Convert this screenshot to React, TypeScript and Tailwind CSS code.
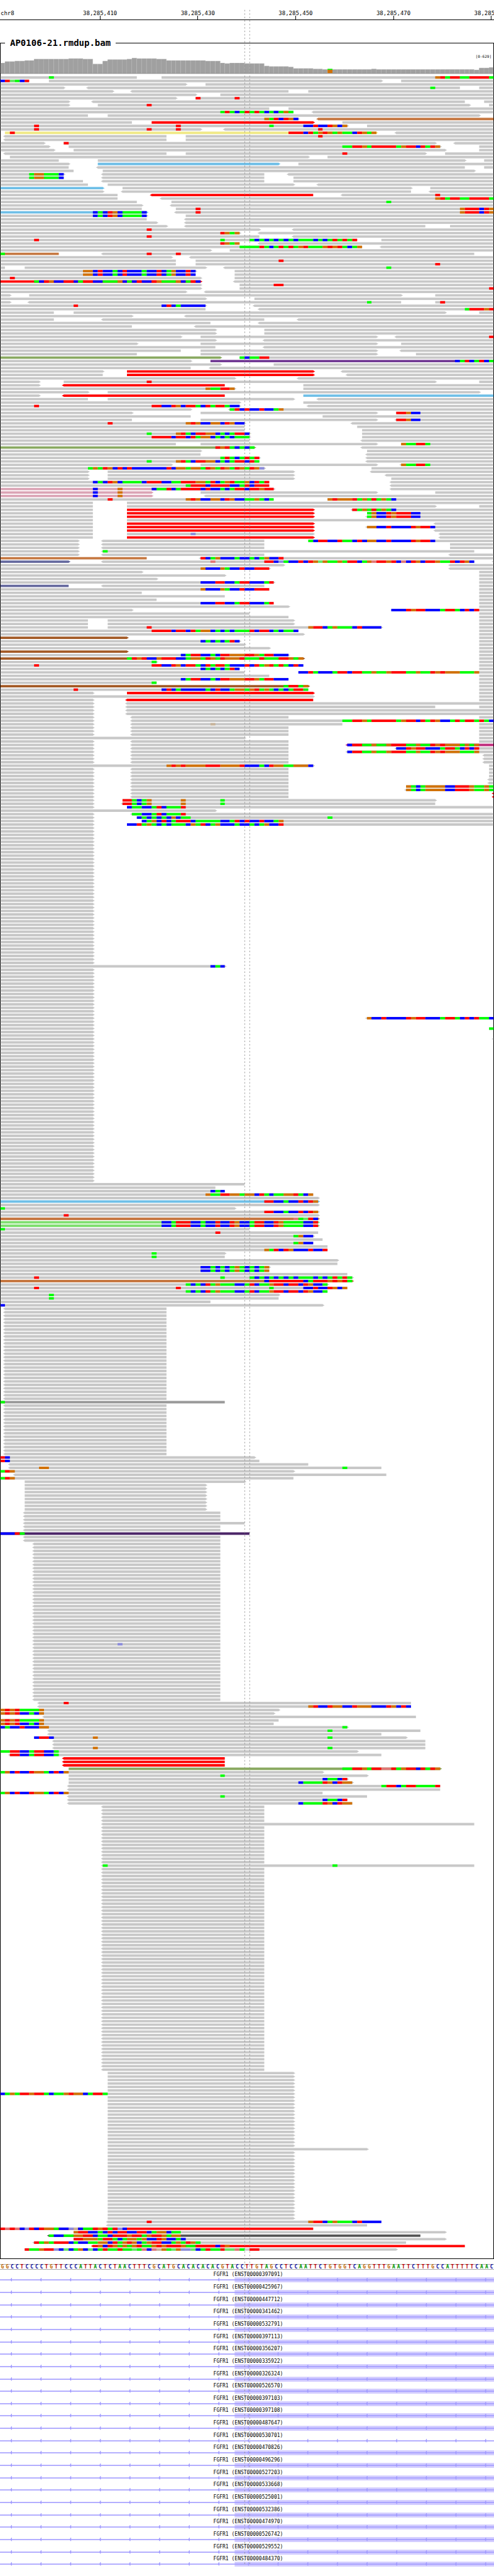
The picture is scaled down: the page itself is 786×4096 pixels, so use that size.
import React from "react";

const COLUMNS = 101;
const FIRST_ROW_Y = 154;
const ROW_PITCH = 7;
const BAR_HEIGHT = 5;

const edge = (column: number) =>
  Math.min(999, Math.max(1, Math.round((column * 1000) / COLUMNS)));

const READ_COLORS: Record<string, string> = {
  r: "#ff0000",
  y: "#f0e987",
  n: "#c67842",
  k: "#6fbfe7",
  v: "#89a961",
  p: "#723a94",
  m: "#dba4b5",
  s: "#65699e",
  w: "#a35a26",
  l: "#80df70",
  c: "#c02d7d",
  d: "#555555",
  u: "#4b2568",
  e: "#999999",
};

const BASE_COLORS: Record<string, string> = {
  A: "#00ff00",
  C: "#0000ff",
  G: "#d17105",
  T: "#ff0000",
  a: "#64e664",
  c: "#8c8cdc",
  g: "#c8b49b",
  t: "#e17777",
};

// One line per row of packed reads. "start-end" is a read in base columns,
// "<" and ">" mark the strand arrow, "/x" the insert-size colour, and
// "@column:BASES" the mismatching bases. "*n" repeats the line n times.
const ROWS = `
0-28 33-101 @10:A @89:GTATTAATTTTA
0-6 @0:CTaACT 10-78> 82-101
0-38> 42-101
0-13> <18-94 98-101 @88:A
0-23> <27-59 63-101
0-40> 45-101
0-36> 40-101 @40:T @48:T
0-14> <19-95 99-101
0-14> 20-96> 100-101 @30:T
0-55 59-101
0-60 @45:ATACATATACACAGA <64-101
0-18 22-98>
0-61> @54:GATCTGC <65-101/n
0-27 31-64>/r 70-101
0-71> @7:T @36:T @55:A @62:CCTCCTGCG 75-101
0-41> <46-101 @7:T @30:T @36:T @65:T
1-77>/y @2:T @59:TTTCTAGTGAGAACTGAG <81-101
<1-34 38-101 @65:T
<1-34 38-101
0-9> 13-89> <93-101 @13:T
0-10> 14-90> @70:AATTGATTTTTAGTTCTATG 98-101
0-11> 15-91> 98-101
<1-34 38-87> 91-101 @70:T
2-63> 67-101
0-12 20-95> 99-101
0-14> 20-57>/k 61-101
0-14 <20-95 99-101
0-15 21-97>
0-13> @6:AGGAAAC <21-54 <59-101
0-13 @6:AGGAAAC <21-54 60-101
0-17 <21-54 60-101
0-18 22-60> <65-101
0-21>/k 25-84> 88-101
0-21> <25-84 <88-101
0-24 <31-64/r <70-101 @89:T
0-24 <33-101 @89:GTATTAATTTTA
0-28 35-101 @79:A
0-29> <35-101
0-29 36-101 @40:T @94:GTTTCTG
0-30>/k @19:CACTGCAAAAC <36-101 @40:T @94:GTTTCTG
0-30> @19:CACTGCAAAAC 38-101
0-30 <38-101
0-32> <38-101
0-34> <38-87 92-101
0-53> <60-101 @30:T
0-49> @45:TGAG <53-101
0-53 @30:T <60-101
0-73 @7:T @45:A @51:ACACACACACAAACACATATAT 78-101
0-49 @45:TGAG <53-101
0-74 @49:AAAATACATATAGTAAAGTGTACAG <78-101
0-43> 47-101
0-12/n @0:A <21-97 @30:T @36:T
0-35> <39-101
0-36 40-101 @57:T
0-36 40-101 @89:T
0-1 5-42> <46-101 @79:A
0-40> @17:GGCTCCACTCCCACCTCAGCCTC 48-101
0-40 @17:GGCTCCACTCCCACCTCAGCCTC 48-101
0-41> 48-101 @2:T
0-41>/r @7:ACTGCCTTCATTCCAAAGCACTCCTGAAAGCATC <48-101
0-41> 49-101 @56:TT
0-41> 49-101 @100:T
0-38> <42-101
0-2> 6-82> 89-101
0-42> 52-101
0-2> <6-82 89-101 @75:A @90:T
0-42> @15:T @33:CTCACCCCC <52-101
0-42 <53-101 @95:ATTTGT
0-11 15-91> 98-101
0-27> <38-101
0-11 <21-54 <61-101
0-43 <53-101
0-27 <40-101
*2 0-44> 54-101
0-37> 41-77> <81-101 @100:T
0-44> <54-101
0-28> 41-77> 82-101
0-44 <54-101
0-37 41-77> <82-101
0-28 41-77> 85-101
0-45>/v 49-101 @49:ACAATT
0-39> 43-101/p @93:CATCATCA
0-45> 56-101
0-39 <43-101
0-21> 26-64>/r <70-101
0-21 26-64>/r <71-101
0-48> <61-101
0-8> 13-89> 98-101 @30:T
0-8> <13-46/r 62-101
0-48> @42:GAATTG 62-101
0-18> 22-98>
0-8> <13-46/r 62-101/k
0-18 22-60> <65-101
0-49> 62-101
0-49> @7:T @31:TTCCTGCTTACTATTACC <63-101
0-39> <47-101 @47:ATCTCCTCCAG
0-27> 41-77> 81-101 @81:TTGCC
0-39 66-101
0-27 41-77> <81-101 @81:TTGCC
0-50> @22:T @38:GTGCCGGCTGCC <72-101
0-50 73-101
0-50 74-101
0-51> @30:A @36:GTACTTGGCACATTC 74-101
0-51> @31:TTTTCTTCTAGGCACACAAA 74-101
0-51 <74-101
0-36 41-77> 82-101 @82:GAATTA
0-52>/v @44:TGTACACA <74-101
0-41> 75-101
0-41 <75-101
0-53> @45:ATACATAT <75-101
0-53 @30:A @36:GTACTTGGCACATTCTA <75-101
0-35> 41-77> <82-101 @82:GAATTA
0-54> @18:AGATGCTCTCCCCCCCTCGGAGGATGATGATGATGc 76-101
0-18> 22-60> <76-101
0-18> 22-60> <79-101
0-18> 22-60> 80-101
0-55 @19:CACTGCAAAACTTTCCAATTTGGATCAGTAAGCTAT <80-101
0-55 @38:ATTTCTTTTCCATCTTT <80-101
0-56>/m @19:C @24:G @31:CAATCATTTTCTCCACATTCTTGTT <80-101
0-31>/m @19:C @24:G 41-77> 89-101
0-31>/m @19:C @24:G <42-101
0-56 @22:T @38:GTGCCGGCTGCCAAGACA 67-101 @67:GTGGGTAGATAGAC
0-19 26-101
0-19 26-89> 98-101
0-19 26-64>/r <72-101 @72:TAGATAGAC
0-19 26-64>/r 75-101 @75:AGCCTGTTTCC
0-19 26-64>/r <75-101 @75:AGCCTGTTTCC
0-19 26-101
0-19 26-64>/r <89-101
0-19 26-64>/r <75-101 @75:GGCCTCCCCTGTTC
0-19 26-64>/r <89-101
0-19 26-64> @39:c <90-101
0-19 26-64>/r <90-101
0-16> <21-54 63-101 @63:ACTTCCTAACTCGGCCTCCCCTGTTC
*2 0-16> <21-54 92-101
0-16> <21-97 @21:A
0-16> <21-54 <92-101
0-30/n <41-101 @41:TCAGCCCACCACAGCCT
0-14>/s <21-97 @43:t @54:TTCcACCTCTGaGAAGATTCAGtTTGTCtCTGCTTGAATCTGC <101-101
0-58> <92-101
0-55> @41:GCCCGACCTCCTTT <92-101
0-29> 98-101
0-46> 98-101
0-32> 98-101
0-56> @41:CCCTTCCATTCCCAT 98-101
0-14/s <21-54 98-101
0-55 @41:GCCCGACCTCCTTT 98-101
0-29 98-101
0-46 98-101
0-32 98-101
0-56 @41:CCCTTCCATTCCCAT 98-101
0-59> 98-101
0-27> 80-101 @80:CCCTGTTCCCATTACTCT
0-51 98-101
0-59 98-101
*2 0-18 22-60> 98-101
0-18 22-78> @30:T @63:GTTCAGAAACTCCCC 98-101
0-61 @31:TTTTCTTCTAGGCACACAAATCTTCACAAC 98-101
0-62> 98-101
0-26>/w 98-101
0-49> @41:CACACATC 98-101
0-50> 98-101
0-55> 98-101
0-26>/w 98-101
0-59> @37:CATTCCACTTGGGTTGATTCCC 98-101
0-62>/w @26:ATGTCCGTTTCCAGGATGATGGGTAAATAAATTGAG 98-101
0-32> @31:A 98-101
0-62 @7:T @31:TTCCTGCTTACTATTACCCTCTAGTATACTC 98-101
0-49 @41:CACACATC 98-101
0-50 61-101 @61:CCTACCCATTCTTAAGAAGTTTAAGAATGTGGGAAAG
0-55 98-101
0-59 @37:CATTCCACTTGGGTTGATTCCC 98-101
0-32 @31:A 98-101
0-63>/w @58:ATTAG 98-101
0-63 @15:T @33:CTCACCCCCACTCCAGGAGTAGACACATTA 98-101
0-19> 26-64>/r 98-101
0-64> 98-101
0-19> <26-64/r 98-101
0-19> <26-101
0-19> <26-89 98-101
*2 0-19> <26-101
0-19> <27-59 98-101
0-19> <27-101 @70:AATTGATTTTTAGTTCTATGCCATATTATAC
0-19> <27-70 @43:g 98-101
*3 0-19> <27-59 98-101
0-50> 98-101
0-19> <27-59 98-101
0-19> <27-59 <71-101/c @71:CTTAAGAAGTTTAAGAATGTGGGAGAG
0-19> <27-59 <81-101 @81:CCTGTTCCCATTACTCT
0-19> <27-59 <71-101 @71:CTTAAGAAGTTTAAGAATGTGGGAAAG
*3 0-19> <27-59 <99-101
0-64> @34:GTGTGGGGTTTGGGGTCCCACTGGAAGGGC 100-101
*3 0-19> <27-59 100-101
*2 0-19> <27-59 <100-101
0-19> <27-59 83-101 @83:GACAGGGGCCTTTGAAGA
0-19> <27-59 <83-101 @83:GACAGGGGCCTTTGAAGA
*2 0-19> <27-59 <101-101/r
0-19> 25-89> @25:TTACAG @37:G @45:A
0-19> <25-89 @25:TTACAG @37:G @45:A
0-19> 26-101 @26:CAACCATCAAAT
0-44>
0-19> <27-101 @27:AACCATCAAAT
0-19> 28-101 @28:CACACACGCAA @67:A
0-19> 29-101 @29:CAGCTCATTTCAAAAACCATCTCCTCCAG
0-19> 26-101 @26:CCTAGACACAAACGATCAGCCCACCACAGCCT
*40 0-19>
0-46> @43:CAC
*14 0-19>
0-19> <75-101 @75:GCCTCCCCTGTTCCCATTACTCTAAC
*2 0-19>
0-19> 100-101 @100:A
*2 0-19>
0-19> <101-101
*41 0-19>
0-50
0-44
0-46 @43:CAC
0-64 @42:GAATTGGAGGCTACAAGGTACG
0-65>
0-65>/k @54:TTCCACCTCTG
0-65>
0-48> @0:A
0-65> @54:TTCCACCTCTG
0-65> @13:T
0-65>/n @60:tAaTC
*2 0-65>/l @33:CCATTTCCACCTCCTGCCATTCCTGAAAACCT
0-51 @0:A
0-65 @44:T
0-64> @60:AGCC
0-66
0-64 @60:AGCC
0-67
0-67 @54:GATCTGCCCTCCT
0-46> @31:A
0-46 @31:A
0-69>
0-69
0-55> @41:CCACACAGACACAG
0-55 @41:CCACACAGACACAG
0-71
0-72> @7:T @45:A @51:ACACACACACAAACACATATA
0-72>/n @54:CTTTTTTTCATTTGTGTA
0-67> @38:ACACTAGAAACCATCAAGTTCTTCTGCCA
0-71 @7:T @36:T @55:A @62:CCTCCTGCG
0-67 @38:ACACTAGAAACCATCAAGTTCTTCTGCCA
0-57> @10:A
0-57 @10:A
0-43
0-66> @0:C
*27 <1-34
0-46/e @0:A
*15 <1-34
0-52> @0:TC
0-53 @0:TC
<2-63
<2-78 @8:GG @70:A
0-60> @0:ATG
<3-79
0-60 @0:ATG
5-50>
*8 5-42>
*3 <5-45
<5-50
*2 <5-45
0-51/u @0:CCCTA
*2 <5-45
*29 <7-45
<7-45 @24:c
*16 <7-45
<8-84 @13:T
<8-84 @63:GTCCTGGCCTGGGCCCTGCTC
0-57> @0:GTGTAAAAG
0-56> @0:GTGTCCACG
<9-85
0-57 @0:GTGTAAAAG
0-56 @0:GTGTCCACG
0-71> @0:CACCTCCCGG @70:A
<10-86 @67:A
<10-78
7-83> @7:CTTC @19:G @67:A
*2 <11-87
<11-87 @19:G @67:A
0-73> @0:AATTCCATTCCA
<2-78 @2:TTCCATTCCA
*3 <13-46/r
14-90>/v @70:AATTGATTttTAGTTCTATG
0-66> @0:AGCTCCTGGACTCG
14-75> @45:A
14-71> @66:CAACT
14-72> @61:CAAAATGCTGG
<14-90 @78:ATTCATTAAAAT
<14-90
0-66 @0:AGCTCCTGGACTCG
<14-75 @45:A
<14-71 @66:CAACT
<14-72 @61:CAAAATGCTGG
*5 <21-54
<21-97
*11 <21-54
<21-97 @21:A @68:A
*59 <21-54
*6 22-60>
0-60> @0:CAGATTGTTACAAGTGGCATTA
*15 22-60>
22-75>
*20 22-60>
<22-78 @30:T @63:GTTCAGAAACTCCCC
<22-75
0-64/r @0:TtTtCcTCTGGACCcgCAATGTATcC
15-91> @15:GTTCCACTCTTCCTTCAGGCAA
<10-86/d @10:ACCAAGGTTCAACTTTGTTAGTTGAGG
15-91> @15:TTGGGATTACAGGAGCCTGCCAC
<7-83 @7:TAGATTTCACCAAGGCTAGTGCAGTTCCAGATGA
<19-95/r @20:GCTGAGAGTAAGTGTTTGAATTTTCTG
5-81> @5:TAAGTTcCaCAGCaCATAATAAaAtCtgGAaGccaCATAATaatA.TT
`
  .trim()
  .split("\n")
  .flatMap((line) => {
    const repeat = line.match(/^\*(\d+) (.*)$/);
    return repeat ? Array<string>(Number(repeat[1])).fill(repeat[2]) : [line];
  });

function readShape(token: string, y: number, key: string) {
  const match = token.match(/^(<?)(\d+)-(\d+)(>?)(?:\/(\w))?$/);
  if (!match) return null;
  const left = edge(Number(match[2]));
  const right = edge(Number(match[3]));
  const bottom = y + BAR_HEIGHT;
  const start = match[1]
    ? `M${left} ${bottom}L${left - 1} ${y + 4}L${left - 4} ${y + 2.5}L${left - 1} ${y + 1}L${left} ${y}`
    : `M${left} ${bottom}V${y}`;
  const end = match[4]
    ? `H${right}L${right + 1} ${y + 1}L${right + 4} ${y + 2.5}L${right + 1} ${y + 4}L${right} ${bottom}Z`
    : `H${right}V${bottom}Z`;
  return <path key={key} d={start + end} fill={match[5] ? READ_COLORS[match[5]] : "#c8c8c8"} />;
}

function mismatchShapes(token: string, y: number, key: string) {
  const [position, bases] = token.slice(1).split(":");
  const first = Number(position);
  return (bases.match(/(.)\1*/g) ?? []).reduce<{ column: number; shapes: React.ReactNode[] }>(
    (state, run) => {
      const from = edge(state.column);
      const next = state.column + run.length;
      if (run[0] !== ".") {
        state.shapes.push(
          <rect
            key={`${key}-${state.column}`}
            x={from}
            y={y}
            width={edge(next) - from}
            height={BAR_HEIGHT}
            fill={BASE_COLORS[run[0]]}
          />,
        );
      }
      return { column: next, shapes: state.shapes };
    },
    { column: first, shapes: [] },
  ).shapes;
}

function ReadRow({ row, index }: { row: string; index: number }) {
  const y = FIRST_ROW_Y + index * ROW_PITCH;
  const tokens = row.split(" ");
  return (
    <g>
      {tokens.filter((t) => t[0] !== "@").map((t, i) => readShape(t, y, `r${i}`))}
      {tokens.filter((t) => t[0] === "@").map((t, i) => mismatchShapes(t, y, `m${i}`))}
    </g>
  );
}

// [number of columns, top of the coverage bar]
const COVERAGE: [number, number][] = [
  [1, 127], [2, 124], [2, 123], [2, 122], [7, 119], [3, 118], [2, 119], [2, 129],
  [1, 123], [4, 120], [1, 119], [1, 117], [4, 118], [2, 119], [8, 122], [3, 123],
  [1, 127], [1, 128], [3, 127], [4, 128], [1, 133], [4, 134], [1, 135], [4, 138],
  [2, 139], [1, 140], [1, 139], [8, 140], [1, 139], [20, 140], [1, 141], [2, 137],
  [1, 136],
];
const COVERAGE_TOPS = COVERAGE.flatMap(([count, top]) => Array<number>(count).fill(top));
const VARIANT_COLUMN = 67;

function Coverage() {
  return (
    <g>
      {COVERAGE_TOPS.map((top, column) => {
        const x = edge(column);
        const width = edge(column + 1) - x;
        if (column === VARIANT_COLUMN) {
          return (
            <g key={column}>
              <rect x={x} y={top} width={width} height={2} fill="#00ff00" />
              <rect x={x} y={top + 2} width={width} height={146 - top} fill="#d17105" />
            </g>
          );
        }
        return (
          <g key={column}>
            <rect x={x} y={top} width={width} height={148 - top} fill="#afafaf" />
            <rect x={x} y={top + 1} width={width - 1} height={147 - top} fill="#a0a0a0" />
          </g>
        );
      })}
      <rect x={1} y={148} width={998} height={1} fill="#707070" />
    </g>
  );
}

const TICKS = [
  { x: 202.5, label: "38,285,410" },
  { x: 400.5, label: "38,285,430" },
  { x: 598.5, label: "38,285,450" },
  { x: 796.5, label: "38,285,470" },
  { x: 994.5, label: "38,285,490" },
];

function Ruler() {
  return (
    <header className="relative h-8 overflow-hidden border-b border-black text-[9px] leading-[7px]">
      <span className="absolute bottom-[6px] left-px">chr8</span>
      {TICKS.map((tick) => (
        <div
          key={tick.label}
          className="absolute bottom-0 flex -translate-x-1/2 flex-col items-center"
          style={{ left: `${tick.x / 10}%` }}
        >
          <span>{tick.label}</span>
          <span className="h-[6px] w-px bg-black" />
        </div>
      ))}
    </header>
  );
}

const SEQUENCE =
  "GGCCTCCCCTGTTCCCATTACTCTAACTTTCGCATGCACACACACGTACCTTGTAGCCTCCAATTCTGTGGTCAGGTTTGAATTCTTTGCCATTTTTCAAC";

const LETTER_CLASS: Record<string, string> = {
  A: "text-[#009600]",
  C: "text-[#000096]",
  G: "text-[#c06800]",
  T: "text-[#b40000]",
};

function Sequence() {
  return (
    <div className="mt-2 grid grid-cols-[repeat(101,minmax(0,1fr))] border-y border-[#a8a8a8] text-center text-[8px] leading-[7px] font-bold">
      {[...SEQUENCE].map((base, i) => (
        <span key={i} className={LETTER_CLASS[base]}>
          {base}
        </span>
      ))}
    </div>
  );
}

const TRANSCRIPTS = [
  "397091", "425967", "447712", "341462", "532791", "397113", "356207", "335922",
  "326324", "526570", "397103", "397108", "487647", "530701", "470826", "496296",
  "527203", "533668", "525001", "532386", "474970", "526742", "529552", "484370",
];
const INTRON_ONLY = "530701";
const STRAND_MARKS = Array.from({ length: 17 }, (_, i) => 23 + i * 60);

function Transcript({ id }: { id: string }) {
  return (
    <li className="flex aspect-[40/1] flex-col">
      <span className="pl-1 text-center text-[8px] leading-[10px]">FGFR1 (ENST00000{id})</span>
      <svg
        className="block min-h-0 w-full flex-1 overflow-visible"
        viewBox="0 14 1000 12.3"
        preserveAspectRatio="none"
        aria-hidden="true"
      >
        {id !== INTRON_ONLY && <rect x={475} y={13} width={525} height={10} fill="#d2ccff" />}
        <rect x={0} y={17} width={1000} height={2} fill="#a09aff" />
        {STRAND_MARKS.map((x) => (
          <path key={x} d={`M${x - 2} 18L${x} 14H${x + 1}V21H${x}Z`} fill="#a09aff" />
        ))}
      </svg>
    </li>
  );
}

function CenterGuides() {
  return (
    <svg
      className="pointer-events-none absolute inset-0 h-full w-full"
      viewBox="0 0 1000 5213"
      preserveAspectRatio="none"
      aria-hidden="true"
    >
      <path
        d="M495.5 20V5190M505.5 20V5190"
        stroke="#8c8c8c"
        strokeWidth={1}
        strokeDasharray="3 4"
        fill="none"
      />
    </svg>
  );
}

export default function App() {
  return (
    <main className="relative w-full overflow-hidden bg-white pb-3 font-['DejaVu_Sans_Mono',monospace] text-black">
      <Ruler />
      <fieldset className="relative mt-[26px] min-w-0 border border-black">
        <legend className="ml-[7px] px-2 text-[14px] leading-5 font-bold">
          AP0106-21.rmdup.bam
        </legend>
        <span className="absolute top-0 right-[3px] mt-2 text-[6px] leading-[8px]">[0-629]</span>
        <div className="-mx-px">
          <svg
            className="block aspect-[1000/4470] w-full"
            viewBox="0 99 1000 4472"
            preserveAspectRatio="none"
            role="img"
            aria-label="Coverage and aligned reads"
          >
            <Coverage />
            {ROWS.map((row, index) => (
              <ReadRow key={index} row={row} index={index} />
            ))}
          </svg>
        </div>
      </fieldset>
      <Sequence />
      <ul className="pt-[3px]">
        {TRANSCRIPTS.map((id) => (
          <Transcript key={id} id={id} />
        ))}
      </ul>
      <CenterGuides />
    </main>
  );
}
